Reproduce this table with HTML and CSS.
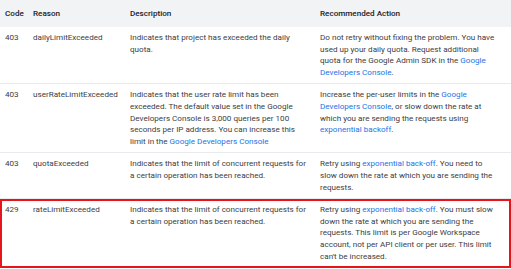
FILE: index.html
```html
<!DOCTYPE html>
<html lang="en">
<head>
  <meta charset="UTF-8" />
  <title>Error codes</title>
  <link rel="stylesheet" href="styles.css">
</head>
<body>
  <table class="errors">
    <thead>
      <tr>
        <th class="col-code">Code</th>
        <th class="col-reason">Reason</th>
        <th class="col-desc">Description</th>
        <th class="col-action">Recommended Action</th>
      </tr>
    </thead>
    <tbody>
      <tr>
        <td>403</td>
        <td>dailyLimitExceeded</td>
        <td>Indicates that project has exceeded the daily quota.</td>
        <td>Do not retry without fixing the problem. You have used up your daily quota. Request additional quota for the Google Admin SDK in the <a href="#">Google Developers Console</a>.</td>
      </tr>
      <tr>
        <td>403</td>
        <td>userRateLimitExceeded</td>
        <td>Indicates that the user rate limit has been exceeded. The default value set in the Google Developers Console is 3,000 queries per 100 seconds per IP address. You can increase this limit in the <a href="#">Google Developers Console</a></td>
        <td>Increase the per-user limits in the <a href="#">Google Developers Console</a>, or slow down the rate at which you are sending the requests using <a href="#">exponential backoff</a>.</td>
      </tr>
      <tr>
        <td>403</td>
        <td>quotaExceeded</td>
        <td>Indicates that the limit of concurrent requests for a certain operation has been reached.</td>
        <td>Retry using <a href="#">exponential back-off</a>. You need to slow down the rate at which you are sending the requests.</td>
      </tr>
      <tr class="highlight">
        <td>429</td>
        <td>rateLimitExceeded</td>
        <td>Indicates that the limit of concurrent requests for a certain operation has been reached.</td>
        <td>Retry using <a href="#">exponential back-off</a>. You must slow down the rate at which you are sending the requests. This limit is per Google Workspace account, not per API client or per user. This limit can't be increased.</td>
      </tr>
    </tbody>
  </table>
</body>
</html>
```

FILE: styles.css
```css
body {
  margin: 0;
  background: #fff;
  font-family: Roboto, 'Noto Sans', sans-serif;
  color: #3c4043;
}

.errors {
  width: 511px;
  border-collapse: collapse;
  table-layout: fixed;
  font-size: 8.1px;
  line-height: 11.6px;
}

.errors th {
  background: #f1f3f4;
  color: #202124;
  font-weight: 500;
  text-align: left;
  height: 27px;
  padding: 0 5px;
}

.errors td {
  vertical-align: top;
  padding: 5px;
  border-bottom: 1px solid #e8eaed;
}

.errors th:last-child,
.errors td:last-child {
  padding-right: 11px;
}

/* fixed layout: widths are content widths, padding comes on top */
.col-code { width: 18px; }
.col-reason { width: 87px; }
.col-desc { width: 180px; }
.col-action { width: auto; }

.errors a {
  color: #1a73e8;
  text-decoration: none;
}

.errors tr.highlight {
  outline: 2px solid #e8141c;
  outline-offset: -2px;
}
```
